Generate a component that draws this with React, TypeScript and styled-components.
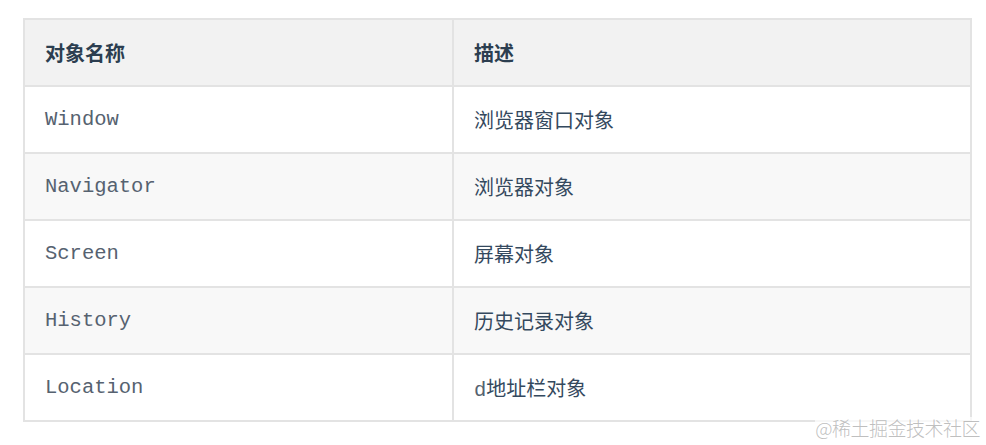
import React from "react";
import styled, { createGlobalStyle } from "styled-components";

const Global = createGlobalStyle`
  html, body { margin: 0; padding: 0; background: #ffffff; }
  body { width: 986px; height: 445px; overflow: hidden; }
`;

const Page = styled.div`
  position: relative;
  width: 986px;
  height: 445px;
  padding: 18px 0 0 23px;
  box-sizing: border-box;
  font-family: "Noto Sans CJK SC", "Noto Sans", sans-serif;
  color: #34495e;
`;

const Table = styled.table`
  width: 949px;
  border-collapse: collapse;
  table-layout: fixed;
  font-size: 20px;
`;

const Row = styled.tr<{ $shade: string }>`
  background: ${(p) => p.$shade};
  height: 67px;
`;

const HeadCell = styled.th`
  border: 2px solid #e3e3e3;
  padding: 0 20px;
  text-align: left;
  font-weight: 700;
  font-size: 20px;
  height: 66px;
  box-sizing: border-box;
  color: #2c3e50;
`;

const Cell = styled.td<{ $mono?: boolean }>`
  border: 2px solid #e3e3e3;
  padding: 0 20px;
  box-sizing: border-box;
  font-family: ${(p) =>
    p.$mono
      ? `"Liberation Mono", "Courier New", monospace`
      : `"Noto Sans CJK SC", "Noto Sans", sans-serif`};
  color: ${(p) => (p.$mono ? "#566270" : "#34495e")};
  font-size: ${(p) => (p.$mono ? "20.5px" : "20px")};
`;

const Mono = styled.span`
  font-family: "Liberation Mono", "Courier New", monospace;
  font-size: 20.5px;
  color: #566270;
`;

const Watermark = styled.div`
  position: absolute;
  right: 6px;
  bottom: 6px;
  font-family: "Noto Sans CJK SC", sans-serif;
  font-weight: 300;
  font-size: 19px;
  line-height: 22px;
  color: rgba(170, 170, 170, 0.75);
  background: rgba(255, 255, 255, 0.7);
  letter-spacing: -0.5px;
`;

const rows = [
  { name: "Window", desc: "浏览器窗口对象" },
  { name: "Navigator", desc: "浏览器对象" },
  { name: "Screen", desc: "屏幕对象" },
  { name: "History", desc: "历史记录对象" },
  { name: "Location", desc: "地址栏对象", prefix: "d" },
];

export default function App() {
  return (
    <>
      <Global />
      <Page>
        <Table>
          <colgroup>
            <col style={{ width: 429 }} />
            <col />
          </colgroup>
          <thead>
            <Row $shade="#f2f2f2">
              <HeadCell>对象名称</HeadCell>
              <HeadCell>描述</HeadCell>
            </Row>
          </thead>
          <tbody>
            {rows.map((r, i) => (
              <Row key={r.name} $shade={i % 2 === 1 ? "#f8f8f8" : "#ffffff"}>
                <Cell $mono>{r.name}</Cell>
                <Cell>
                  {r.prefix && <Mono>{r.prefix}</Mono>}
                  {r.desc}
                </Cell>
              </Row>
            ))}
          </tbody>
        </Table>
        <Watermark>@稀土掘金技术社区</Watermark>
      </Page>
    </>
  );
}
